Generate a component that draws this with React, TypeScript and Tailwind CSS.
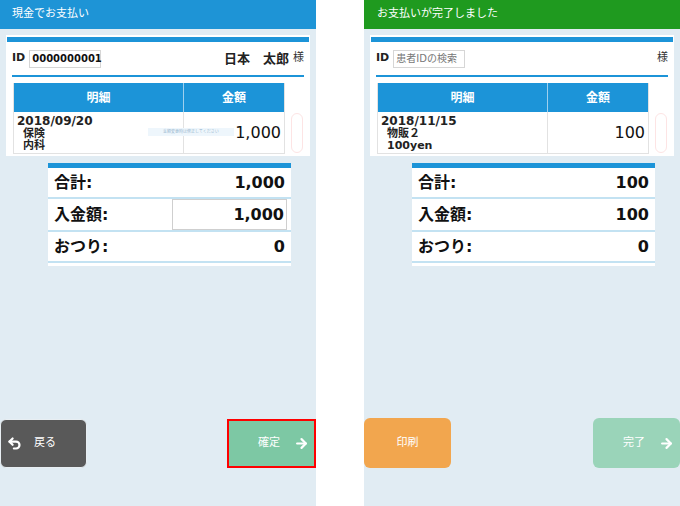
import React from 'react';
import { ArrowRight, Undo2 } from 'lucide-react';

const jp = { fontFamily: '"DejaVu Sans", "Noto Sans CJK JP", sans-serif' };

type Item = { date: string; lines: string[]; amount: string };

const DetailCard = ({ id, name, item, hint }: { id?: string; name?: string; item: Item; hint?: boolean }) => (
  <div className="mx-[6px] mt-[6px] bg-white px-[1px] pt-[2px] pb-[2px]">
    <div className="h-[5px] bg-[#1c94d8]" />
    {/* ID row */}
    <div className="flex h-[33px] items-center pl-[5px] pr-[5px]">
      <span className="text-[11px] font-bold text-[#222]">ID</span>
      {id ? (
        <div className="ml-[4px] flex h-[18px] w-[72px] items-center border border-[#d6d6d6] pl-[2px] text-[10px] font-bold text-[#111]">
          {id}
        </div>
      ) : (
        <div className="ml-[4px] flex h-[18px] w-[72px] items-center border border-[#d6d6d6] pl-[2px] text-[10px] text-[#777]">
          患者IDの検索
        </div>
      )}
      <div className="flex-1" />
      {name && <span className="mr-[4px] text-[13px] font-bold text-[#222]">{name}</span>}
      <span className="text-[11px] text-[#333]">様</span>
    </div>
    <div className="mx-[5px] h-[2px] bg-[#1c94d8]" />
    {/* table */}
    <div className="mt-[6px] flex pl-[6px]">
      <div className="w-[272px] border border-[#e2e2e2] border-t-0">
        <div className="flex h-[29px] bg-[#1c94d8] text-[12px] font-bold text-white">
          <div className="flex w-[170px] items-center justify-center border-r border-[#9fd0ee]">明細</div>
          <div className="flex flex-1 items-center justify-center">金額</div>
        </div>
        <div className="relative flex h-[41px]">
          <div className="w-[170px] border-r border-[#e2e2e2] pl-[3px] pt-[2px] text-[#222]">
            <div className="text-[12px] font-bold leading-[14px]">{item.date}</div>
            {item.lines.map((l) => (
              <div key={l} className="pl-[6px] text-[11px] font-bold leading-[12px]">{l}</div>
            ))}
          </div>
          <div className="flex flex-1 items-center justify-end pr-[3px] text-[16px] text-[#111]">{item.amount}</div>
          {hint && (
            <div className="absolute left-[134px] top-[16px] flex h-[8px] w-[86px] items-center justify-center bg-[#eef6fc] text-[4px] text-[#9ab8d0]">
              金額変更時は修正してください
            </div>
          )}
        </div>
      </div>
      <div className="ml-[6px] mt-[30px] h-[40px] w-[12px] rounded-full border border-[#fde4e4]" />
    </div>
  </div>
);

const Summary = ({ total, paid, change, input }: { total: string; paid: string; change: string; input?: boolean }) => (
  <div className="ml-[48px] mt-[7px] w-[243px] bg-white pb-[3px] text-[16px] font-bold text-[#111]">
    <div className="h-[5px] bg-[#1c94d8]" />
    <div className="flex h-[31px] items-center justify-between border-b-2 border-[#c3e2f2] px-[6px]">
      <span>合計:</span>
      <span>{total}</span>
    </div>
    <div className="flex h-[33px] items-center justify-between border-b-2 border-[#c3e2f2] pl-[6px] pr-[4px]">
      <span>入金額:</span>
      {input ? (
        <div className="flex h-[31px] w-[115px] items-center justify-end border border-[#cfcfcf] pr-[2px]">{paid}</div>
      ) : (
        <span className="pr-[2px]">{paid}</span>
      )}
    </div>
    <div className="flex h-[31px] items-center justify-between border-b-2 border-[#c3e2f2] px-[6px]">
      <span>おつり:</span>
      <span>{change}</span>
    </div>
  </div>
);

export default function App() {
  return (
    <div className="flex h-[506px] w-[680px] bg-white" style={jp}>
      {/* left panel */}
      <div className="flex w-[316px] flex-col bg-[#e1ecf3]">
        <div className="flex h-[29px] items-center bg-[#1e94d6] pl-[12px] text-[11px] text-white">現金でお支払い</div>
        <DetailCard
          id="0000000001"
          name="日本　太郎"
          item={{ date: '2018/09/20', lines: ['保険', '内科'], amount: '1,000' }}
          hint
        />
        <Summary total="1,000" paid="1,000" change="0" input />
        <div className="flex-1" />
        <div className="mb-[38px] flex items-center justify-between">
          <button className="flex h-[49px] w-[87px] items-center rounded-[6px] border border-[#e8eef2] bg-[#595959] pl-[6px] text-[11px] text-white">
            <Undo2 className="h-[15px] w-[15px]" strokeWidth={3.5} />
            <span className="ml-[12px]">戻る</span>
          </button>
          <button className="flex h-[49px] w-[89px] items-center justify-end border-2 border-[#ff0000] bg-[#7dc8a4] pr-[5px] text-[11px] text-white">
            <span>確定</span>
            <ArrowRight className="ml-[14px] h-[15px] w-[15px]" strokeWidth={3.5} />
          </button>
        </div>
      </div>

      <div className="w-[48px]" />

      {/* right panel */}
      <div className="flex w-[316px] flex-col bg-[#e1ecf3]">
        <div className="flex h-[29px] items-center bg-[#1f9a1f] pl-[13px] text-[11px] text-white">お支払いが完了しました</div>
        <DetailCard item={{ date: '2018/11/15', lines: ['物販２', '100yen'], amount: '100' }} />
        <Summary total="100" paid="100" change="0" />
        <div className="flex-1" />
        <div className="mb-[38px] flex items-center justify-between">
          <button className="flex h-[50px] w-[87px] items-center justify-center rounded-[6px] bg-[#f2a64e] text-[11px] text-white">
            印刷
          </button>
          <button className="flex h-[50px] w-[87px] items-center justify-end rounded-[6px] bg-[#9ad4b9] pr-[6px] text-[11px] text-white">
            <span>完了</span>
            <ArrowRight className="ml-[14px] h-[15px] w-[15px]" strokeWidth={3.5} />
          </button>
        </div>
      </div>
    </div>
  );
}
